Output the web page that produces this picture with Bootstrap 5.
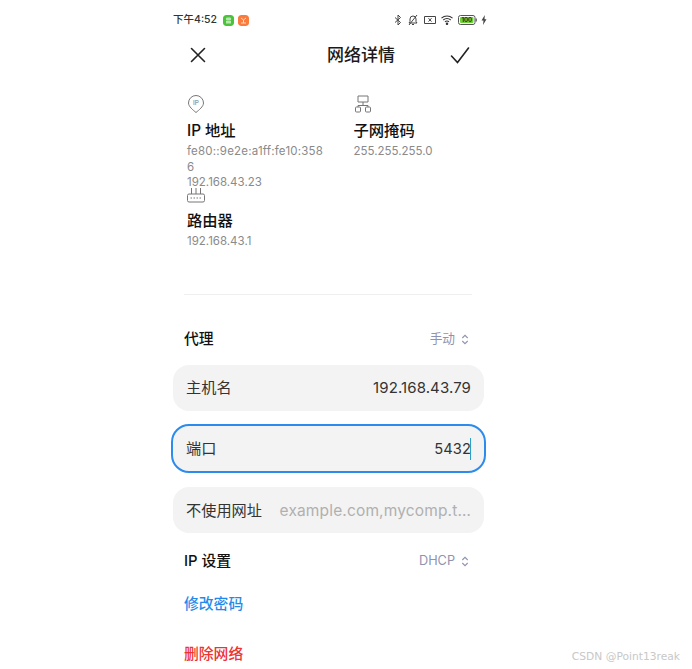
<!DOCTYPE html>
<html lang="zh">
<head>
<meta charset="utf-8">
<title>网络详情</title>
<link href="https://cdn.jsdelivr.net/npm/bootstrap@5.3.0/dist/css/bootstrap.min.css" rel="stylesheet">
<style>
html,body{height:669px;overflow:hidden;background:#fff}
body{font-family:Inter,"Noto Sans CJK SC",sans-serif;color:#222;position:relative}
.phone{width:322px;margin-left:168px;height:669px}
.sbar{height:16px;margin-top:12px;padding:0 3px 0 5px;font-size:10.500px;line-height:16px;color:#333;font-weight:500}
.appic{width:11px;height:11px;border-radius:3px;display:block}
.sapps{gap:6px}
.sicons{gap:5px}
.sicons svg{display:block}
.hdr{height:24px;margin-top:15px;padding:0 20px}
.hdr-t{font-size:17px;font-weight:500;color:#1a1a1a;line-height:24px;margin-left:64px}
.infos{margin-top:28px;padding-left:19px;height:199px}
.info-c{width:166.500px;flex:none}
.info-row{margin-bottom:-6px}
.info-v{font-size:11.500px;line-height:15.600px;color:#8a8a8a;width:137.500px;word-break:break-all}
.ip6{letter-spacing:.2px}
.info-t{font-size:15.300px;font-weight:500;color:#111;line-height:22px;margin-top:7px;margin-bottom:2px}
.sep{height:1px;background:#efefef;margin:0 18px 0 16px}
.sec{padding:0 21px 0 16px;height:22px;line-height:22px}
.sec-t{font-size:14.800px;font-weight:500;color:#111}
.sec-v{font-size:12.700px;color:#8f93b0}
.sec-v svg{margin-left:2px}
.fld{height:46px;border-radius:16px;background:#f3f3f3;margin:0 6px 0 5px;padding:0 13px;font-size:15.200px;color:#333}
.fld-on{height:49px;margin:13px 4px 14px 3px;padding:2px 13px 0 13px;border:2px solid #2b8cee;border-radius:18px}
.fld-l{padding-top:2px}
.fld-v{font-size:15px;letter-spacing:.1px;color:#333}
.fld-n{font-size:14.700px}
.ph{font-size:15.500px;color:#b0b0b0;letter-spacing:.15px}
.caret-bar{display:inline-block;width:1px;height:22px;background:#2aa0c8;margin-left:-1px}
.act{font-size:14.800px;font-weight:500;padding-left:16px;line-height:22px}
.act-b{color:#1f8ceb;margin-top:21px}
.act-r{color:#ee3333;margin-top:28px}
.wm{position:absolute;right:12px;bottom:4px;font-size:10.700px;color:#c8c8c8;font-family:"DejaVu Sans",sans-serif}
.gap-s{margin-top:33px}.gap-f{margin-top:15px}.gap-i{margin-top:17px}
</style>
</head>
<body>
<div class="phone">
  <div class="sbar d-flex justify-content-between align-items-center">
    <div class="sapps d-flex align-items-center">
      <span>下午4:52</span>
      <span class="d-flex align-items-center gap-1">
        <svg class="appic" width="11" height="11" viewBox="0 0 11 11"><rect width="11" height="11" rx="3" fill="#4cc13c"/><rect x="3" y="2.500" width="5" height="3" rx="1" fill="#b7e8ae"/><rect x="3" y="6" width="5" height="2.500" fill="#b7e8ae"/></svg>
        <svg class="appic" width="11" height="11" viewBox="0 0 11 11"><rect width="11" height="11" rx="3" fill="#fa7b3c"/><path d="M3 3l2.500 2L8 3M3 8h5M5.500 5v3" stroke="#ffd9c4" fill="none"/></svg>
      </span>
    </div>
    <div class="sicons d-flex align-items-center">
      <svg width="8" height="12" viewBox="0 0 8 12" fill="none" stroke="#444"><path d="M1 3.500l5.500 5L4 11V1l2.500 2.500L1 8.500"/></svg>
      <svg width="12" height="12" viewBox="0 0 12 12" fill="none" stroke="#444"><path d="M2 9h8L9 7.500V5a3 3 0 0 0-6 0v2.500zM5 10.500h2M2 11L10 1"/></svg>
      <svg width="12" height="10" viewBox="0 0 12 10" fill="none" stroke="#444"><path d="M.5 1.500h11v7H.5z"/><path d="M4.500 3.200l3 3.400M7.500 3.200l-3 3.400"/></svg>
      <svg width="12" height="10" viewBox="0 0 12 10" fill="none" stroke="#333" stroke-width="1.100"><path d="M.5 3.200a8 8 0 0 1 11 0M2.300 5a5.300 5.300 0 0 1 7.400 0M4 6.800a2.800 2.800 0 0 1 4 0"/><circle cx="6" cy="8.800" r=".7" fill="#333"/></svg>
      <span class="d-flex align-items-center gap-1">
        <svg width="19" height="10" viewBox="0 0 19 10"><rect x=".5" y=".5" width="16.500" height="9" rx="2" fill="#fff" stroke="#555"/><rect x="2" y="2" width="13.500" height="6" rx="1" fill="#6fd33c"/><rect x="17.600" y="3.500" width="1.200" height="3" fill="#555"/><text x="8.750" y="7.300" font-size="6" font-weight="700" text-anchor="middle" fill="#1b3a10" font-family="Inter">100</text></svg>
        <svg width="6" height="10" viewBox="0 0 6 10"><path d="M3.800 0L.5 5.600h2L2 10l3.500-5.800h-2z" fill="#444"/></svg>
      </span>
    </div>
  </div>

  <div class="hdr d-flex justify-content-between align-items-center">
    <svg width="20" height="20" viewBox="0 0 20 20" fill="none" stroke="#222" stroke-width="1.600" stroke-linecap="round"><path d="M3.500 3.500l13 13M16.500 3.500l-13 13"/></svg>
    <div class="hdr-t">网络详情</div>
    <svg width="20" height="20" viewBox="0 0 20 20" fill="none" stroke="#222" stroke-width="1.600" stroke-linecap="round"><path d="M1.500 11l6 6.500L18.500 3"/></svg>
  </div>

  <div class="infos">
    <div class="info-row d-flex">
      <div class="info-c">
        <svg class="d-block" width="18" height="18" viewBox="0 0 18 18" fill="none" stroke="#777"><path d="M9 17.500C6 15 1.500 11.500 1.500 8a7.500 7.500 0 0 1 15 0c0 3.500-4.500 7-7.500 9.500z"/><text x="9" y="10.300" font-size="6.500" fill="#777" stroke="none" text-anchor="middle" font-family="Inter">IP</text></svg>
        <div class="info-t">IP 地址</div>
        <div class="info-v"><span class="ip6">fe80::9e2e:a1ff:fe10:3586</span><br>192.168.43.23</div>
      </div>
      <div class="info-c">
        <svg class="d-block" width="18" height="18" viewBox="0 0 18 18" fill="none" stroke="#777"><path d="M4 1h10v6H4zM9 7v3M4 12v-1.500h10V12"/><rect x="1.500" y="12" width="5" height="5" rx="1"/><rect x="11.500" y="12" width="5" height="5" rx="1"/></svg>
        <div class="info-t">子网掩码</div>
        <div class="info-v">255.255.255.0</div>
      </div>
    </div>
    <div class="info-c">
      <svg class="d-block" width="18" height="18" viewBox="0 0 18 18" fill="none" stroke="#777"><rect x=".5" y="9" width="17" height="8" rx="1.500"/><path d="M4.500 9V3M9 9V3M13.500 9V3"/><path d="M3.500 13h11" stroke-dasharray="1.500 1.500"/></svg>
      <div class="info-t">路由器</div>
      <div class="info-v">192.168.43.1</div>
    </div>
  </div>

  <div class="sep"></div>

  <div class="sec gap-s d-flex justify-content-between align-items-center">
    <span class="sec-t">代理</span>
    <span class="sec-v d-flex align-items-center gap-1">手动
      <svg width="8" height="11" viewBox="0 0 8 11" fill="none" stroke="#8f93b0" stroke-width="1.100"><path d="M1.300 4L4 1.300 6.700 4M1.300 7L4 9.700 6.700 7"/></svg>
    </span>
  </div>

  <div class="fld gap-f d-flex justify-content-between align-items-center">
    <span>主机名</span><span class="fld-v">192.168.43.79</span>
  </div>
  <div class="fld fld-on d-flex justify-content-between align-items-center">
    <span>端口</span><span class="fld-v fld-n d-flex align-items-center">5432<span class="caret-bar"></span></span>
  </div>
  <div class="fld fld-l d-flex justify-content-between align-items-center">
    <span>不使用网址</span><span class="ph">example.com,mycomp.t…</span>
  </div>

  <div class="sec gap-i d-flex justify-content-between align-items-center">
    <span class="sec-t">IP 设置</span>
    <span class="sec-v d-flex align-items-center gap-1">DHCP
      <svg width="8" height="11" viewBox="0 0 8 11" fill="none" stroke="#8f93b0" stroke-width="1.100"><path d="M1.300 4L4 1.300 6.700 4M1.300 7L4 9.700 6.700 7"/></svg>
    </span>
  </div>

  <div class="act act-b">修改密码</div>
  <div class="act act-r">删除网络</div>
</div>
<div class="wm">CSDN @Point13reak</div>
<script src="https://cdn.jsdelivr.net/npm/bootstrap@5.3.0/dist/js/bootstrap.bundle.min.js"></script>
</body>
</html>
